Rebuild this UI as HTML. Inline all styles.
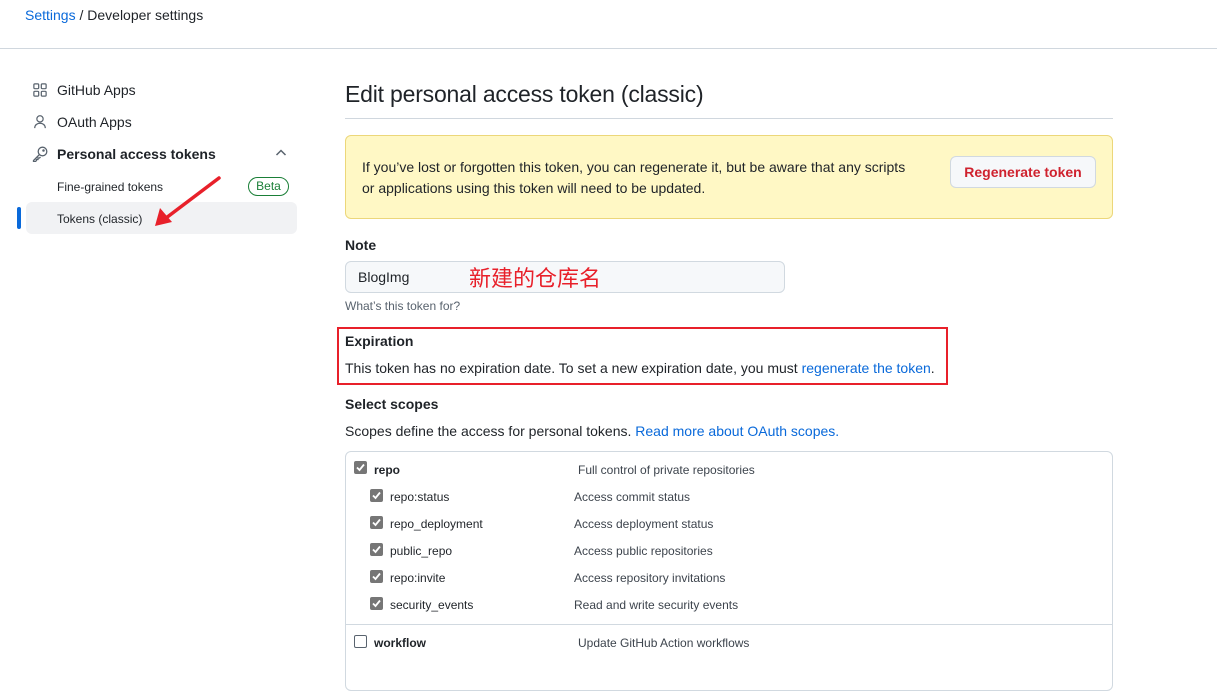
<!DOCTYPE html>
<html><head><meta charset="utf-8"><style>
*{margin:0;padding:0;box-sizing:border-box}
body{width:1217px;height:661px;overflow:hidden;background:#fff;font-family:"Liberation Sans","Noto Sans CJK SC",sans-serif;color:#1f2328;position:relative;font-size:14px}
.a{position:absolute;white-space:nowrap}
.b{font-weight:bold}
.cb{position:absolute;width:13px;height:13px;border-radius:2px;background:#767676}
.cb svg{position:absolute;left:1px;top:1px}
.sm{font-size:12px;color:#3d444d}
</style></head><body>
<div class="a" style="left:25px;top:7px;font-size:14px"><span style="color:#0969da">Settings</span> / Developer settings</div>
<div class="a" style="left:0;top:48px;width:1217px;height:1px;background:#d0d7de"></div>

<svg class="a" style="left:33px;top:83px" width="14" height="14" viewBox="0 0 16 16" fill="none" stroke="#59636e" stroke-width="1.4"><rect x="1" y="1" width="5.5" height="5.5" rx="1.2"/><rect x="9.5" y="1" width="5.5" height="5.5" rx="1.2"/><rect x="1" y="9.5" width="5.5" height="5.5" rx="1.2"/><rect x="9.5" y="9.5" width="5.5" height="5.5" rx="1.2"/></svg>
<div class="a" style="left:57px;top:82px">GitHub Apps</div>
<svg class="a" style="left:33px;top:114px" width="14" height="15" viewBox="0 0 16 16" fill="none" stroke="#59636e" stroke-width="1.4"><circle cx="8" cy="5" r="3.6"/><path d="M2 15.5c0-3.5 2.7-5.5 6-5.5s6 2 6 5.5"/></svg>
<div class="a" style="left:57px;top:114px">OAuth Apps</div>
<svg class="a" style="left:32px;top:146px" width="16" height="16" viewBox="0 0 16 16" fill="none" stroke="#59636e" stroke-width="1.3"><circle cx="10.5" cy="5.5" r="4.3"/><path d="M7.5 8.5L1.5 14.5v1h2l1-1v-1h1.5v-1.5h1.5l1-1"/><circle cx="11.5" cy="4.5" r="0.6" fill="#59636e"/></svg>
<div class="a b" style="left:57px;top:146px">Personal access tokens</div>
<svg class="a" style="left:275px;top:148px" width="12" height="10" viewBox="0 0 12 10" fill="none" stroke="#59636e" stroke-width="1.5"><path d="M1.5 7L6 2.5 10.5 7"/></svg>
<div class="a" style="left:57px;top:180px;font-size:12px">Fine-grained tokens</div>
<div class="a" style="left:248px;top:177px;width:41px;height:19px;border:1px solid #1a7f37;border-radius:10px;color:#1a7f37;font-size:12px;text-align:center;line-height:17px">Beta</div>
<div class="a" style="left:26px;top:202px;width:271px;height:32px;background:#f1f2f4;border-radius:6px"></div>
<div class="a" style="left:17px;top:207px;width:4px;height:22px;background:#0969da;border-radius:2px"></div>
<div class="a" style="left:57px;top:212px;font-size:12px">Tokens (classic)</div>
<svg class="a" style="left:150px;top:172px" width="75" height="60" viewBox="150 172 75 60"><path d="M219 178L166 218" stroke="#e8202a" stroke-width="3.5" stroke-linecap="round"/><path d="M155 226L160 208 172 222Z" fill="#e8202a"/></svg>

<div class="a" style="left:345px;top:81px;font-size:23px;letter-spacing:-0.2px">Edit personal access token (classic)</div>
<div class="a" style="left:345px;top:118px;width:768px;height:1px;background:#d0d7de"></div>

<div class="a" style="left:345px;top:135px;width:768px;height:84px;background:#fff8c5;border:1px solid #ecd77a;border-radius:6px"></div>
<div class="a" style="left:362px;top:157px;line-height:21px">If you’ve lost or forgotten this token, you can regenerate it, but be aware that any scripts<br>or applications using this token will need to be updated.</div>
<div class="a" style="left:950px;top:156px;width:146px;height:32px;background:#f6f8fa;border:1px solid #d1d9e0;border-radius:6px;color:#cf222e;text-align:center;line-height:30px;font-size:14px;font-weight:600">Regenerate token</div>

<div class="a b" style="left:345px;top:237px">Note</div>
<div class="a" style="left:345px;top:261px;width:440px;height:32px;background:#f6f8fa;border:1px solid #d1d9e0;border-radius:6px"></div>
<div class="a" style="left:358px;top:269px">BlogImg</div>
<div class="a" style="left:469px;top:262px;font-size:22px;color:#e8202a;font-family:'Noto Sans CJK SC',sans-serif;line-height:30px">新建的仓库名</div>
<div class="a sm" style="left:345px;top:299px;color:#59636e">What’s this token for?</div>

<div class="a" style="left:337px;top:327px;width:611px;height:58px;border:2px solid #e8202a"></div>
<div class="a b" style="left:345px;top:333px">Expiration</div>
<div class="a" style="left:345px;top:360px">This token has no expiration date. To set a new expiration date, you must <span style="color:#0969da">regenerate the token</span>.</div>

<div class="a b" style="left:345px;top:396px">Select scopes</div>
<div class="a" style="left:345px;top:423px">Scopes define the access for personal tokens. <span style="color:#0969da">Read more about OAuth scopes.</span></div>

<div class="a" style="left:345px;top:451px;width:768px;height:240px;border:1px solid #d1d9e0;border-radius:6px"></div>
<div class="a" style="left:345px;top:624px;width:768px;height:1px;background:#d1d9e0"></div>

<div class="cb" style="left:354px;top:461px"><svg width="11" height="11" viewBox="0 0 11 11"><path d="M2 5.5L4.5 8 9 2.5" stroke="#fff" stroke-width="1.8" fill="none"/></svg></div>
<div class="a b" style="left:374px;top:463px;font-size:12px">repo</div>
<div class="a sm" style="left:578px;top:463px">Full control of private repositories</div>

<div class="cb" style="left:370px;top:489px"><svg width="11" height="11" viewBox="0 0 11 11"><path d="M2 5.5L4.5 8 9 2.5" stroke="#fff" stroke-width="1.8" fill="none"/></svg></div>
<div class="a" style="left:390px;top:490px;font-size:12px">repo:status</div>
<div class="a sm" style="left:574px;top:490px">Access commit status</div>

<div class="cb" style="left:370px;top:516px"><svg width="11" height="11" viewBox="0 0 11 11"><path d="M2 5.5L4.5 8 9 2.5" stroke="#fff" stroke-width="1.8" fill="none"/></svg></div>
<div class="a" style="left:390px;top:517px;font-size:12px">repo_deployment</div>
<div class="a sm" style="left:574px;top:517px">Access deployment status</div>

<div class="cb" style="left:370px;top:543px"><svg width="11" height="11" viewBox="0 0 11 11"><path d="M2 5.5L4.5 8 9 2.5" stroke="#fff" stroke-width="1.8" fill="none"/></svg></div>
<div class="a" style="left:390px;top:544px;font-size:12px">public_repo</div>
<div class="a sm" style="left:574px;top:544px">Access public repositories</div>

<div class="cb" style="left:370px;top:570px"><svg width="11" height="11" viewBox="0 0 11 11"><path d="M2 5.5L4.5 8 9 2.5" stroke="#fff" stroke-width="1.8" fill="none"/></svg></div>
<div class="a" style="left:390px;top:571px;font-size:12px">repo:invite</div>
<div class="a sm" style="left:574px;top:571px">Access repository invitations</div>

<div class="cb" style="left:370px;top:597px"><svg width="11" height="11" viewBox="0 0 11 11"><path d="M2 5.5L4.5 8 9 2.5" stroke="#fff" stroke-width="1.8" fill="none"/></svg></div>
<div class="a" style="left:390px;top:598px;font-size:12px">security_events</div>
<div class="a sm" style="left:574px;top:598px">Read and write security events</div>

<div class="a" style="left:354px;top:635px;width:13px;height:13px;border:1px solid #59636e;border-radius:2px;background:#fff"></div>
<div class="a b" style="left:374px;top:636px;font-size:12px">workflow</div>
<div class="a sm" style="left:578px;top:636px">Update GitHub Action workflows</div>
</body></html>
